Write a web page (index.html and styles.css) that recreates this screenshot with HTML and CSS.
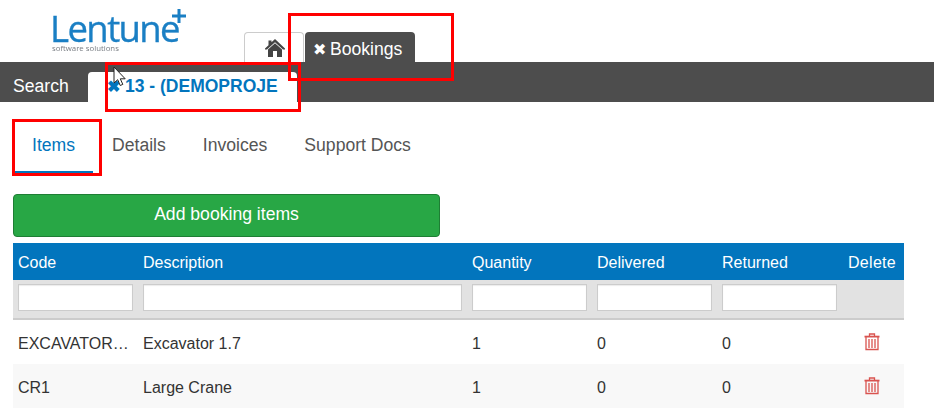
FILE: index.html
```html
<!DOCTYPE html>
<html lang="en">
<head>
<meta charset="utf-8">
<title>Bookings</title>
<link rel="stylesheet" href="styles.css">
</head>
<body>
<header class="top">
  <div class="logo">
    <div class="logo-name">Lentune</div>
    <svg class="logo-plus" width="14" height="14" viewBox="0 0 14 14"><path d="M5.500 0h3v5.500H14v3H8.500V14h-3V8.500H0v-3h5.500z" fill="#1a7fc4"/></svg>
    <div class="logo-sub">software solutions</div>
  </div>
  <nav class="top-tabs">
    <div class="home-tab">
      <svg width="20" height="18" viewBox="0 0 20 18"><path d="M10 0 L20 9.500 V10.500 H18 L10 3.300 L2 10.500 H0 V9.500 L3.500 6.200 V1.500 H6.500 V3.300 Z M10 4.200 L17 10.500 V18 H12 V12 H8 V18 H3 V10.500 Z" fill="#444"/></svg>
    </div>
    <div class="book-tab"><span class="x">✖</span>Bookings</div>
  </nav>
</header>
<div class="bar">
  <div class="search">Search</div>
  <div class="active-tab"><span class="x">✖</span>13 - (DEMOPROJE</div>
</div>
<nav class="sub-tabs">
  <div class="sub on">Items</div>
  <div class="sub">Details</div>
  <div class="sub">Invoices</div>
  <div class="sub">Support Docs</div>
</nav>
<button class="add" type="button">Add booking items</button>
<table class="grid">
  <colgroup><col class="c1"><col class="c2"><col class="c3"><col class="c3"><col class="c3"><col></colgroup>
  <thead>
    <tr class="head"><th>Code</th><th>Description</th><th>Quantity</th><th>Delivered</th><th>Returned</th><th class="th-del">Delete</th></tr>
    <tr class="filter"><td><input type="text"></td><td><input type="text"></td><td><input type="text"></td><td><input type="text"></td><td><input type="text"></td><td></td></tr>
  </thead>
  <tbody>
    <tr><td><div class="clip">EXCAVATOR1.7T</div></td><td>Excavator 1.7</td><td>1</td><td>0</td><td>0</td><td class="del"><svg width="16" height="18" viewBox="0 0 16 18"><path d="M5.500 3V1H10.500V3M2 4V16.500H14V4M5 6V15M8 6V15M11 6V15" fill="none" stroke="#d9534f" stroke-width="1.300"/><path d="M.5 2.700H15.500V4.500H.5z" fill="#d9534f"/></svg></td></tr>
    <tr class="alt"><td><div class="clip">CR1</div></td><td>Large Crane</td><td>1</td><td>0</td><td>0</td><td class="del"><svg width="16" height="18" viewBox="0 0 16 18"><path d="M5.500 3V1H10.500V3M2 4V16.500H14V4M5 6V15M8 6V15M11 6V15" fill="none" stroke="#d9534f" stroke-width="1.300"/><path d="M.5 2.700H15.500V4.500H.5z" fill="#d9534f"/></svg></td></tr>
  </tbody>
</table>
<div class="mark m1"></div>
<div class="mark m2"></div>
<div class="mark m3"></div>
<svg class="cursor" width="14" height="22" viewBox="0 0 14 22"><path d="M1 1V17L4.700 13.700L7.200 19.500L9.800 18.400L7.300 12.800H12.200Z" fill="#fff" stroke="#222" stroke-width="1"/></svg>
</body>
</html>
```
FILE: styles.css
```css
* { box-sizing: border-box; }
html, body { margin: 0; padding: 0; }
body {
  font-family: "Liberation Sans", Arial, sans-serif;
  font-size: 16px;
  color: #333;
  background: #fff;
  overflow: hidden;
  height: 420px;
  position: relative;
}
.top { height: 62px; display: flex; align-items: flex-end; }
.logo { position: relative; width: 244px; height: 62px; padding: 9px 0 0 50px; }
.logo-name {
  font-family: "Open Sans", sans-serif;
  font-size: 36.500px;
  line-height: 34px;
  letter-spacing: -1.600px;
  color: #1a7fc4;
  -webkit-text-stroke: .35px #1a7fc4;
  filter: blur(.4px);
  padding-top: 2px;
  height: 34px;
}
.logo-plus { position: absolute; left: 172px; top: 9px; filter: blur(.4px); }
.logo-sub {
  font-family: "Open Sans", sans-serif;
  font-size: 7.800px;
  line-height: 10px;
  padding-left: 2px;
  color: #777c82;
  filter: blur(.3px);
}
.top-tabs { display: flex; gap: 1px; height: 30px; }
.home-tab {
  width: 60px;
  background: #fff;
  border: 1px solid #ccc;
  border-bottom: 0;
  border-radius: 4px 4px 0 0;
  padding: 6px 0 0 20px;
  line-height: 0;
}
.book-tab {
  width: 110px;
  background: #4d4d4d;
  color: #fff;
  border-radius: 4px 4px 0 0;
  font-size: 17.600px;
  line-height: 34px;
  padding-left: 8px;
  white-space: nowrap;
}
.x { font-size: 16px; margin-right: 4px; }
.bar {
  height: 40px;
  background: #4d4d4d;
  display: flex;
  align-items: flex-end;
}
.search {
  width: 88px;
  height: 40px;
  padding-left: 13px;
  line-height: 49px;
  font-size: 17.600px;
  color: #fff;
}
.active-tab {
  width: 209px;
  height: 30px;
  background: #fff;
  border-radius: 4px 4px 0 0;
  color: #0275bd;
  font-weight: bold;
  font-size: 17.500px;
  line-height: 28px;
  padding-left: 19px;
  white-space: nowrap;
}
.active-tab .x { margin-right: 5px; }
.sub-tabs {
  display: flex;
  height: 72px;
  padding: 29px 0 0 15px;
  font-size: 17.600px;
}
.sub { height: 43px; padding: 0 19px; line-height: 28px; color: #555; margin-right: -1px; }
.sub.on { width: 78px; padding: 0 0 0 17px; color: #0275bd; border-bottom: 3px solid #0275bd; margin: 0; }
.add {
  display: block;
  width: 427px;
  height: 43px;
  margin: 20px 0 6px 13px;
  background: #28a745;
  border: 1px solid #1e7e34;
  border-radius: 4px;
  color: #fff;
  font-family: inherit;
  font-size: 17.600px;
  padding: 0 0 2px;
}
.grid {
  width: 891px;
  margin-left: 13px;
  border-collapse: separate;
  border-spacing: 0;
  table-layout: fixed;
}
.c1 { width: 125px; }
.c2 { width: 329px; }
.c3 { width: 125px; }
.grid th, .grid td { padding: 0 5px; text-align: left; font-weight: normal; }
.head { background: #0275bd; height: 37px; }
.head th { color: #fff; padding-top: 2px; }
.head .th-del { padding-left: 6px; letter-spacing: .3px; white-space: nowrap; }
.filter { background: #e2e2e2; height: 40px; }
.filter td { border-bottom: 2px solid #ccc; padding-bottom: 3px; }
.filter input {
  display: block;
  width: 100%;
  height: 27px;
  border: 1px solid #ccc;
  background: #fff;
  padding: 0;
  box-shadow: inset 0 1px 1px rgba(0,0,0,.08);
}
tbody tr { height: 44px; }
tbody td { padding-top: 4px !important; }
.alt { background: #f8f8f8; }
.clip { overflow: hidden; white-space: nowrap; text-overflow: ellipsis; }
.del { padding-left: 22px !important; line-height: 0; padding-top: 0 !important; padding-bottom: 1px !important; }
.mark { position: absolute; border: 3px solid #f00; }
.m1 { left: 288px; top: 13px; width: 166px; height: 68px; }
.m2 { left: 105px; top: 62px; width: 196px; height: 50px; }
.m3 { left: 12px; top: 119px; width: 90px; height: 57px; }
.cursor { position: absolute; left: 113px; top: 66px; }
```
